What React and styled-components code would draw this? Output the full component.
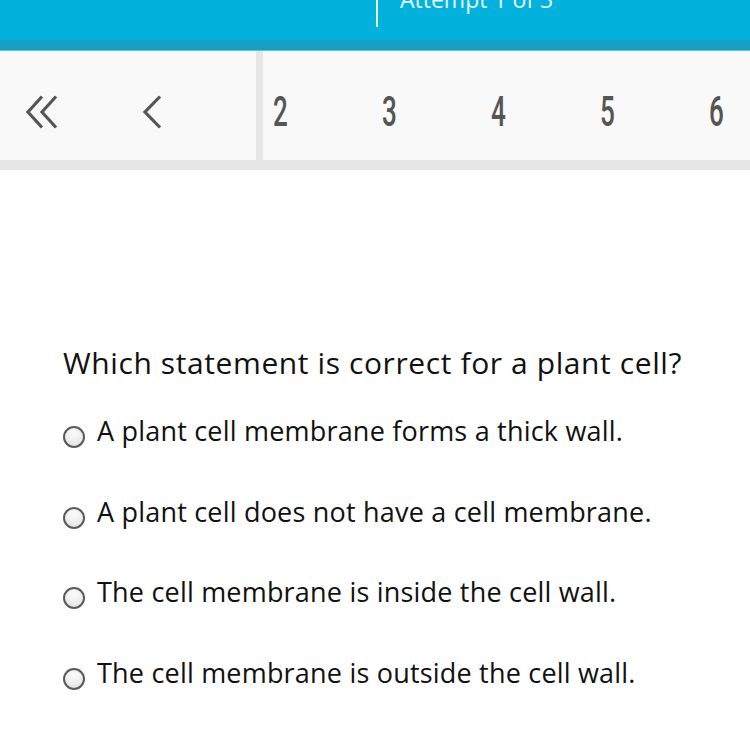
import React from "react";
import styled, { createGlobalStyle } from "styled-components";

const Global = createGlobalStyle`
  html, body { margin: 0; padding: 0; background: #ffffff; }
  body { font-family: "Open Sans", sans-serif; }
`;

const Page = styled.div`
  width: 750px;
  height: 750px;
  overflow: hidden;
  display: flex;
  flex-direction: column;
  & > * { flex-shrink: 0; }
`;

const Header = styled.header`
  height: 40px;
  background: #02b1dc;
  display: flex;
  align-items: flex-start;
  overflow: hidden;
`;

const HeaderDivider = styled.div`
  width: 2px;
  height: 27px;
  margin-left: 376px;
  background: #e8f7fc;
`;

const AttemptText = styled.div`
  margin-left: 22px;
  margin-top: -15px;
  font-family: "Open Sans", sans-serif;
  font-size: 23px;
  line-height: 28px;
  color: #e6f6fb;
`;

const Strip = styled.div`
  height: 10px;
  background: #149fc3;
  border-bottom: 1px solid #5cc6e0;
`;

const Nav = styled.nav`
  height: 97px;
  padding-top: 12px;
  background: #f9f9f9;
  display: flex;
  border-bottom: 10px solid #e6e6e6;
`;

const NavLeft = styled.div`
  width: 256px;
  flex-shrink: 0;
  display: flex;
  align-items: center;
  border-right: 7px solid #e6e6e6;
  margin-top: -12px;
  padding-top: 12px;
`;

const IconButton = styled.div`
  width: ${(p) => p.$w}px;
  margin-left: ${(p) => p.$ml}px;
  height: 34px;
  display: flex;
  align-items: center;
  justify-content: center;
`;

const Pages = styled.div`
  flex: 1;
  min-width: 0;
  display: flex;
  align-items: center;
  overflow: hidden;
`;

const PageNum = styled.div`
  width: 109px;
  flex-shrink: 0;
  display: flex;
  justify-content: center;
  font-family: "Roboto", sans-serif;
  font-size: 42px;
  font-weight: 500;
  color: #555555;
  transform: scaleX(0.62);
  margin-left: ${(p) => p.$ml || 0}px;
`;

const Content = styled.main`
  padding: 173px 0 0 63px;
  font-family: "Open Sans", sans-serif;
  color: #111111;
`;

const Question = styled.div`
  font-size: 30px;
  letter-spacing: 0.6px;
  line-height: 40px;
  margin-bottom: 28px;
`;

const Options = styled.div`
  display: flex;
  flex-direction: column;
  gap: 40.5px;
`;

const Option = styled.label`
  display: flex;
  align-items: center;
  font-size: 27px;
  letter-spacing: 0.2px;
  line-height: 40px;
`;

const Radio = styled.span`
  box-sizing: border-box;
  width: 22px;
  height: 22px;
  border-radius: 50%;
  border: 2px solid #5a5a5a;
  background: radial-gradient(circle at 50% 30%, #fbfbfb 0%, #ececec 60%, #d4d4d4 100%);
  margin-top: 12px;
  margin-right: 12px;
  flex-shrink: 0;
`;

const options = [
  "A plant cell membrane forms a thick wall.",
  "A plant cell does not have a cell membrane.",
  "The cell membrane is inside the cell wall.",
  "The cell membrane is outside the cell wall.",
];

export default function App() {
  return (
    <Page>
      <Global />
      <Header>
        <HeaderDivider />
        <AttemptText>Attempt 1 of 3</AttemptText>
      </Header>
      <Strip />
      <Nav>
        <NavLeft>
          <IconButton $w={34} $ml={25}>
            <svg width="34" height="34" viewBox="0 0 34 34" fill="none" stroke="#555" strokeWidth="3.2" strokeLinecap="butt">
              <path d="M17 1.5 L3 17 L17 32.5" />
              <path d="M31 1.5 L17 17 L31 32.5" />
            </svg>
          </IconButton>
          <IconButton $w={22} $ml={82}>
            <svg width="22" height="34" viewBox="0 0 22 34" fill="none" stroke="#555" strokeWidth="3.2">
              <path d="M19 1.5 L4 17 L19 32.5" />
            </svg>
          </IconButton>
        </NavLeft>
        <Pages>
          <PageNum $ml={-37.5}>2</PageNum>
          <PageNum>3</PageNum>
          <PageNum>4</PageNum>
          <PageNum>5</PageNum>
          <PageNum>6</PageNum>
        </Pages>
      </Nav>
      <Content>
        <Question>Which statement is correct for a plant cell?</Question>
        <Options>
          {options.map((o) => (
            <Option key={o}>
              <Radio />
              {o}
            </Option>
          ))}
        </Options>
      </Content>
    </Page>
  );
}
